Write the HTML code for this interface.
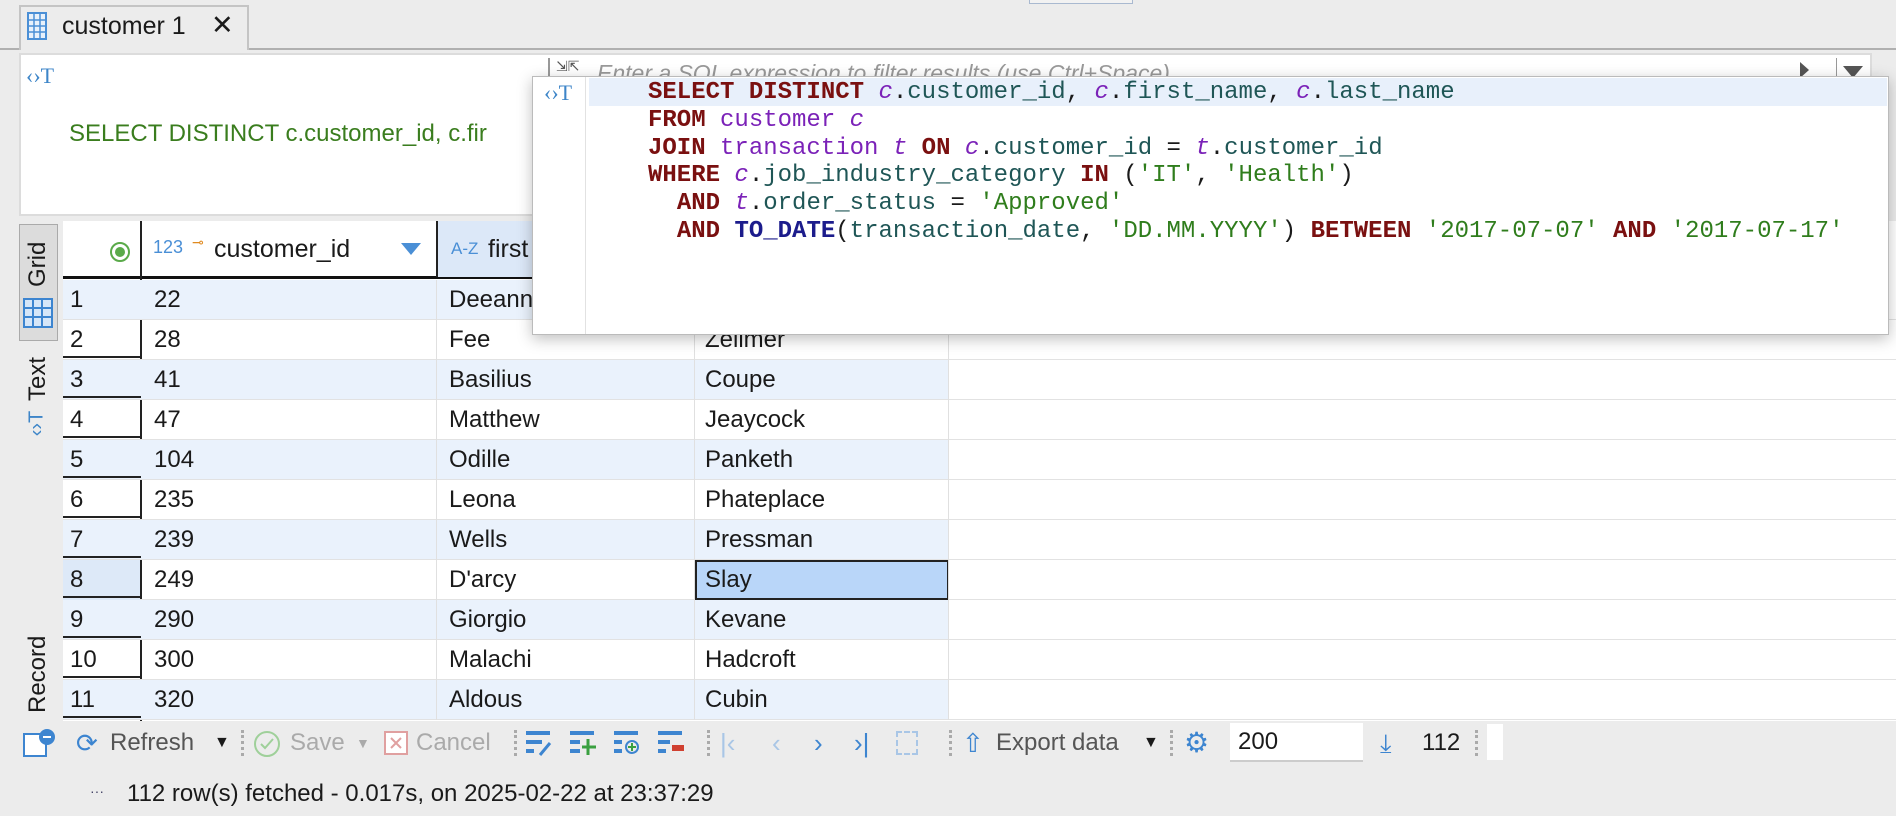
<!DOCTYPE html>
<html><head><meta charset="utf-8"><style>
*{margin:0;padding:0;box-sizing:border-box}
body{width:1896px;height:816px;background:#ececec;font-family:"Liberation Sans",sans-serif;position:relative;overflow:hidden;color:#1a1a1a}
.a{position:absolute}
.mono{font-family:"Liberation Mono","DejaVu Sans Mono",monospace;font-size:24px;white-space:pre}
.k{color:#7a1010;font-weight:bold}.al{color:#7b22b8;font-style:italic}.tb{color:#7b22b8}.id{color:#1f5656}.s{color:#2f7d1c}.f{color:#1c1c8c;font-weight:bold}
.row{position:absolute;left:63px;width:1833px;height:40px;font-size:24px;border-bottom:1px solid #e2e2e2}
.row div{position:absolute;top:0;height:40px;line-height:40px}
.tbt{position:absolute;top:726px;font-size:24px;line-height:34px}
.sep{position:absolute;top:730px;width:2px;height:26px;border-left:3px dotted #aaa}
</style></head><body>
<div class="a" style="left:1029px;top:0;width:104px;height:4px;border:1px solid #a9b9d0;border-top:none;background:#f2f2f2"></div>
<div class="a" style="left:0;top:48px;width:1896px;height:2px;background:#b0b0b0"></div>
<div class="a" style="left:19px;top:5px;width:230px;height:45px;background:#ececec;border:2px solid #c4c4c4;border-bottom:none"></div>
<svg class="a" style="left:27px;top:12px" width="20" height="28" viewBox="0 0 20 28"><rect x="1" y="1" width="18" height="26" fill="#e8f1fb" stroke="#4a8fd6" stroke-width="2"/><path d="M1 8H19M1 14H19M1 20H19M7 1V27M13 1V27" stroke="#4a8fd6" stroke-width="1.5"/></svg>
<div class="a" style="left:62px;top:12px;font-size:25px">customer 1</div>
<div class="a" style="left:211px;top:10px;font-size:27px">✕</div>
<div class="a" style="left:19px;top:53px;width:1853px;height:163px;background:#fff;border:2px solid #dcdcdc"></div>
<div class="a" style="left:26px;top:63px;color:#3d85c8;font-size:22px;font-family:'Liberation Serif',serif">‹›T</div>
<div class="a" style="left:69px;top:120px;color:#3a7d1e;font-size:24px">SELECT DISTINCT c.customer_id, c.fir</div>
<div class="a" style="left:548px;top:58px;width:2px;height:20px;background:#999"></div>
<div class="a" style="left:556px;top:58px;font-size:14px;color:#555">⇲⇱</div>
<div class="a" style="left:597px;top:58px;color:#999;font-style:italic;font-size:23px;height:18px;overflow:hidden;line-height:30px">Enter a SQL expression to filter results (use Ctrl+Space)</div>
<div class="a" style="left:1800px;top:62px;width:0;height:0;border-left:9px solid #555;border-top:8px solid transparent;border-bottom:8px solid transparent"></div>
<div class="a" style="left:1836px;top:58px;width:1px;height:20px;background:#999"></div>
<div class="a" style="left:1843px;top:66px;width:0;height:0;border-top:12px solid #555;border-left:10px solid transparent;border-right:10px solid transparent"></div>
<div class="a" style="left:19px;top:224px;width:39px;height:117px;background:#dcdcdc;border:1px solid #aaa"></div>
<div class="a" style="left:20px;top:234px;width:36px;height:60px;writing-mode:vertical-rl;transform:rotate(180deg);font-size:24px;line-height:36px;text-align:center">Grid</div>
<svg class="a" style="left:23px;top:298px" width="30" height="30" viewBox="0 0 30 30"><rect x="1" y="1" width="28" height="28" fill="#d6e6f8" stroke="#3d85d0" stroke-width="2"/><path d="M1 10H29M1 19H29M10 1V29M19 1V29" stroke="#3d85d0" stroke-width="2"/></svg>
<div class="a" style="left:20px;top:352px;width:36px;height:54px;writing-mode:vertical-rl;transform:rotate(180deg);font-size:24px;line-height:36px;text-align:center">Text</div>
<div class="a" style="left:24px;top:412px;color:#3d85c8;font-size:20px;transform:rotate(-90deg)">‹›T</div>
<div class="a" style="left:20px;top:628px;width:36px;height:92px;writing-mode:vertical-rl;transform:rotate(180deg);font-size:24px;line-height:36px;text-align:center">Record</div>
<div class="a" style="left:63px;top:221px;width:1833px;height:500px;background:#fff"></div>
<div class="a" style="left:63px;top:221px;width:886px;height:58px;background:#fff;border-bottom:3px solid #111"></div>
<div class="a" style="left:437px;top:221px;width:258px;height:56px;background:#dce8f8"></div>
<div class="a" style="left:140px;top:221px;width:2px;height:500px;background:#222"></div>
<div class="a" style="left:436px;top:221px;width:2px;height:56px;background:#222"></div>
<svg class="a" style="left:109px;top:241px" width="22" height="22"><circle cx="11" cy="11" r="9" fill="none" stroke="#5aaa4a" stroke-width="2"/><circle cx="11" cy="11" r="5" fill="#5aaa4a"/></svg>
<div class="a" style="left:153px;top:237px;color:#4a8fd6;font-size:18px">123</div>
<div class="a" style="left:192px;top:234px;color:#e08a20;font-size:14px">⊸</div>
<div class="a" style="left:214px;top:235px;font-size:25px">customer_id</div>
<div class="a" style="left:401px;top:243px;width:0;height:0;border-top:12px solid #4a8fd6;border-left:10px solid transparent;border-right:10px solid transparent"></div>
<div class="a" style="left:451px;top:239px;color:#4a8fd6;font-size:17px">A-Z</div>
<div class="a" style="left:488px;top:235px;font-size:25px">first</div>

<div class="row" style="top:280px;background:linear-gradient(90deg,#eaf2fc 886px,#fff 886px)"><div style="left:7px">1</div><div style="left:91px">22</div><div style="left:386px">Deeann</div></div>
<div class="row" style="top:320px"><div style="left:7px">2</div><div style="left:91px">28</div><div style="left:386px">Fee</div><div style="left:642px">Zellmer</div></div>
<div class="row" style="top:360px;background:linear-gradient(90deg,#eaf2fc 886px,#fff 886px)"><div style="left:7px">3</div><div style="left:91px">41</div><div style="left:386px">Basilius</div><div style="left:642px">Coupe</div></div>
<div class="row" style="top:400px"><div style="left:7px">4</div><div style="left:91px">47</div><div style="left:386px">Matthew</div><div style="left:642px">Jeaycock</div></div>
<div class="row" style="top:440px;background:linear-gradient(90deg,#eaf2fc 886px,#fff 886px)"><div style="left:7px">5</div><div style="left:91px">104</div><div style="left:386px">Odille</div><div style="left:642px">Panketh</div></div>
<div class="row" style="top:480px"><div style="left:7px">6</div><div style="left:91px">235</div><div style="left:386px">Leona</div><div style="left:642px">Phateplace</div></div>
<div class="row" style="top:520px;background:linear-gradient(90deg,#eaf2fc 886px,#fff 886px)"><div style="left:7px">7</div><div style="left:91px">239</div><div style="left:386px">Wells</div><div style="left:642px">Pressman</div></div>
<div class="row" style="top:560px"><div style="left:0;width:77px;background:#dde9f8"></div><div style="left:7px">8</div><div style="left:91px">249</div><div style="left:386px">D'arcy</div><div style="left:632px;width:254px;background:#b9d6f9;border:2px solid #222;padding-left:8px;line-height:36px">Slay</div></div>
<div class="row" style="top:600px;background:linear-gradient(90deg,#eaf2fc 886px,#fff 886px)"><div style="left:7px">9</div><div style="left:91px">290</div><div style="left:386px">Giorgio</div><div style="left:642px">Kevane</div></div>
<div class="row" style="top:640px"><div style="left:7px">10</div><div style="left:91px">300</div><div style="left:386px">Malachi</div><div style="left:642px">Hadcroft</div></div>
<div class="row" style="top:680px;background:linear-gradient(90deg,#eaf2fc 886px,#fff 886px)"><div style="left:7px">11</div><div style="left:91px">320</div><div style="left:386px">Aldous</div><div style="left:642px">Cubin</div></div>
<div class="a" style="left:436px;top:280px;width:1px;height:440px;background:#e0e0e0"></div>
<div class="a" style="left:694px;top:280px;width:1px;height:440px;background:#e0e0e0"></div>
<div class="a" style="left:948px;top:280px;width:1px;height:440px;background:#e0e0e0"></div>
<div class="a" style="left:63px;top:318px;width:78px;height:402px;background:repeating-linear-gradient(180deg,transparent 0 38px,#222 38px 40px)"></div>
<div class="a" style="left:532px;top:76px;width:1357px;height:259px;background:#fff;border:1px solid #bbb;box-shadow:0 4px 14px rgba(0,0,0,.25)"></div>
<div class="a" style="left:585px;top:77px;width:1px;height:257px;background:#e2e2e2"></div>
<div class="a" style="left:589px;top:78px;width:1298px;height:28px;background:#e8f0fb"></div>
<div class="a" style="left:544px;top:80px;color:#3d85c8;font-size:22px;font-family:'Liberation Serif',serif">‹›T</div>
<div class="a mono" style="left:648px;top:79px;line-height:27.8px"><span class="k">SELECT DISTINCT</span> <span class="al">c</span>.<span class="id">customer_id</span>, <span class="al">c</span>.<span class="id">first_name</span>, <span class="al">c</span>.<span class="id">last_name</span>
<span class="k">FROM</span> <span class="tb">customer</span> <span class="al">c</span>
<span class="k">JOIN</span> <span class="tb">transaction</span> <span class="al">t</span> <span class="k">ON</span> <span class="al">c</span>.<span class="id">customer_id</span> = <span class="al">t</span>.<span class="id">customer_id</span>
<span class="k">WHERE</span> <span class="al">c</span>.<span class="id">job_industry_category</span> <span class="k">IN</span> (<span class="s">'IT'</span>, <span class="s">'Health'</span>)
  <span class="k">AND</span> <span class="al">t</span>.<span class="id">order_status</span> = <span class="s">'Approved'</span>
  <span class="k">AND</span> <span class="f">TO_DATE</span>(<span class="id">transaction_date</span>, <span class="s">'DD.MM.YYYY'</span>) <span class="k">BETWEEN</span> <span class="s">'2017-07-07'</span> <span class="k">AND</span> <span class="s">'2017-07-17'</span></div>
<svg class="a" style="left:22px;top:728px" width="34" height="30"><rect x="2" y="6" width="22" height="22" fill="#fff" stroke="#3d85d0" stroke-width="2"/><circle cx="25" cy="9" r="8" fill="#3d85d0"/><rect x="21" y="8" width="8" height="2" fill="#fff"/></svg>
<div class="tbt" style="left:76px;color:#3d85d0;font-size:26px">⟳</div>
<div class="tbt" style="left:110px;color:#555">Refresh</div><div class="tbt" style="left:214px;font-size:16px">▼</div>
<div class="sep" style="left:241px"></div>
<svg class="a" style="left:253px;top:730px" width="28" height="28"><circle cx="14" cy="14" r="12" fill="none" stroke="#9fd09a" stroke-width="2"/><path d="M8 14l4 4 8-9" fill="none" stroke="#9fd09a" stroke-width="2"/></svg>
<div class="tbt" style="left:290px;color:#aaa">Save</div><div class="tbt" style="left:356px;font-size:14px;color:#aaa">▼</div>
<svg class="a" style="left:384px;top:731px" width="24" height="24"><rect x="1" y="1" width="22" height="22" fill="#fff" stroke="#e0a0a0" stroke-width="2"/><path d="M7 7l10 10M17 7L7 17" stroke="#e0a0a0" stroke-width="2"/></svg>
<div class="tbt" style="left:416px;color:#aaa">Cancel</div>
<div class="sep" style="left:514px"></div>
<svg class="a" style="left:526px;top:731px" width="180" height="26"><g fill="#3d85d0"><rect x="0" y="0" width="24" height="4"/><rect x="0" y="9" width="16" height="4"/><rect x="0" y="18" width="8" height="4"/><rect x="44" y="0" width="24" height="4"/><rect x="44" y="9" width="10" height="4"/><rect x="44" y="18" width="10" height="4"/><rect x="88" y="0" width="24" height="4"/><rect x="88" y="9" width="8" height="4"/><rect x="88" y="18" width="8" height="4"/><rect x="132" y="0" width="24" height="4"/><rect x="132" y="9" width="12" height="4"/><rect x="132" y="18" width="8" height="4"/></g><path d="M14 24l10-12" stroke="#3d85d0" stroke-width="3"/><path d="M62 8v16M56 16h14" stroke="#3aa040" stroke-width="3"/><circle cx="106" cy="16" r="6" fill="none" stroke="#3d85d0" stroke-width="2"/><path d="M106 12v8M102 16h8" stroke="#3aa040" stroke-width="2"/><rect x="146" y="14" width="12" height="6" fill="#d04030"/></svg>
<div class="sep" style="left:707px"></div>
<div class="tbt" style="left:720px;color:#a9c6e6;font-size:26px">|‹</div>
<div class="tbt" style="left:772px;color:#a9c6e6;font-size:26px">‹</div>
<div class="tbt" style="left:814px;color:#3d85d0;font-size:26px">›</div>
<div class="tbt" style="left:854px;color:#3d85d0;font-size:26px">›|</div>
<div class="a" style="left:896px;top:731px;width:22px;height:24px;border:2px dashed #a9c6e6"></div>
<div class="sep" style="left:949px"></div>
<div class="tbt" style="left:962px;color:#3d85d0;font-size:26px">⇧</div>
<div class="tbt" style="left:996px;color:#555">Export data</div><div class="tbt" style="left:1143px;font-size:16px">▼</div>
<div class="sep" style="left:1170px"></div>
<div class="tbt" style="left:1184px;color:#3d85d0;font-size:28px">⚙</div>
<div class="a" style="left:1230px;top:723px;width:133px;height:39px;background:#fff;border-bottom:2px solid #ccc;font-size:24px;line-height:38px;padding-left:8px">200</div>
<div class="tbt" style="left:1380px;color:#3d85d0;font-size:26px">⤓</div>
<div class="tbt" style="left:1422px">112</div>
<div class="sep" style="left:1475px"></div>
<div class="a" style="left:1487px;top:724px;width:16px;height:36px;background:#fff"></div>
<div class="a" style="left:90px;top:783px;color:#446;font-size:14px">···</div>
<div class="a" style="left:127px;top:780px;font-size:24px">112 row(s) fetched - 0.017s, on 2025-02-22 at 23:37:29</div>
</body></html>
